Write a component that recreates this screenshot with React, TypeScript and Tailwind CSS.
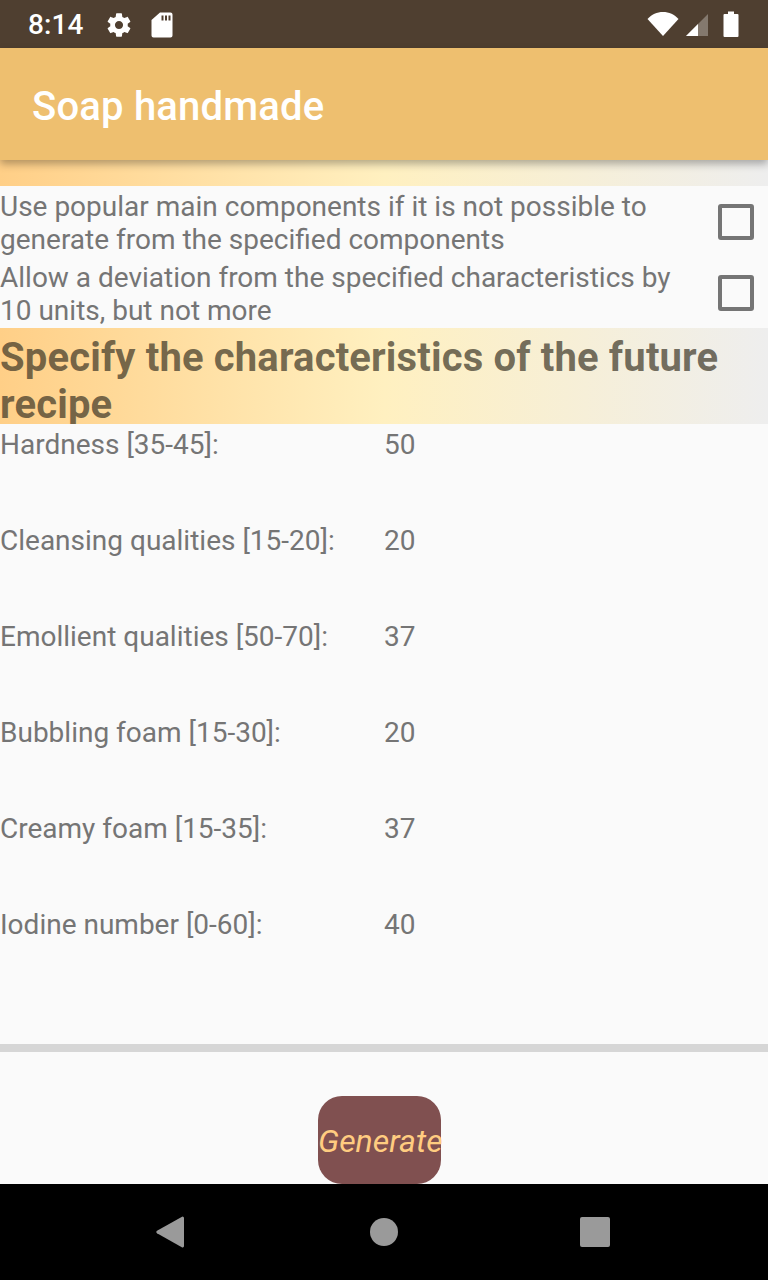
import React from "react";

const rows: [string, string][] = [
  ["Hardness [35-45]:", "50"],
  ["Cleansing qualities [15-20]:", "20"],
  ["Emollient qualities [50-70]:", "37"],
  ["Bubbling foam [15-30]:", "20"],
  ["Creamy foam [15-35]:", "37"],
  ["Iodine number [0-60]:", "40"],
];

const gradient = "bg-[linear-gradient(90deg,#ffcf87_0%,#fff0c0_50%,#eeeeee_100%)]";

function Check() {
  return <div className="w-[36px] h-[36px] rounded-[3px] border-[4px] border-[#757575] mr-[14px] shrink-0" />;
}

export default function App() {
  return (
    <div className="relative w-[768px] h-[1280px] overflow-hidden bg-[#fafafa] flex flex-col font-['Roboto',sans-serif] text-[#757575]">
      <div className="h-[48px] bg-[#4f3f30] flex items-center text-white shrink-0">
        <span className="ml-[28px] text-[28px] leading-[48px] tracking-[0.1px] mt-[2px] font-medium">8:14</span>
        <svg className="ml-[21px] mt-[1px]" width="28" height="28" viewBox="0 0 24 24" fill="#fff">
          <path d="M19.43 12.98c.04-.32.07-.64.07-.98s-.03-.66-.07-.98l2.11-1.65c.19-.15.24-.42.12-.64l-2-3.46c-.12-.22-.39-.3-.61-.22l-2.49 1c-.52-.4-1.08-.73-1.69-.98l-.38-2.65C14.46 2.18 14.25 2 14 2h-4c-.25 0-.46.18-.49.42l-.38 2.65c-.61.25-1.17.59-1.69.98l-2.49-1c-.23-.09-.49 0-.61.22l-2 3.46c-.13.22-.07.49.12.64l2.11 1.65c-.04.32-.07.65-.07.98s.03.66.07.98l-2.11 1.65c-.19.15-.24.42-.12.64l2 3.46c.12.22.39.3.61.22l2.49-1c.52.4 1.08.73 1.69.98l.38 2.65c.03.24.24.42.49.42h4c.25 0 .46-.18.49-.42l.38-2.65c.61-.25 1.17-.59 1.69-.98l2.49 1c.23.09.49 0 .61-.22l2-3.46c.12-.22.07-.49-.12-.64l-2.11-1.65zM12 15.5c-1.93 0-3.5-1.57-3.5-3.5s1.57-3.5 3.500-3.500 3.500 1.570 3.500 3.500-1.570 3.500-3.500 3.500z" />
        </svg>
        <svg className="ml-[18px] mt-[1px]" width="22" height="26" viewBox="0 0 22 26" fill="#fff">
          <path fillRule="evenodd" d="M9 1h10.500A2 2 0 0 1 21.500 3v21a2 2 0 0 1-2 2H2.500a2 2 0 0 1-2-2V8.500z M10.500 4v5h2V4z M14 4v5h2V4z M17.500 4v5h2V4z" transform="translate(0 -0.500)" />
        </svg>
        <div className="flex-1" />
        <svg width="32" height="26" viewBox="0 0 32 26" className="mr-[6px]" fill="#fff">
          <path d="M0.500 8C4.500 3.500 10 1 16 1s11.500 2.500 15.500 7L16 25z" />
        </svg>
        <svg width="24" height="24" viewBox="0 0 24 24" className="mr-[14px]">
          <path d="M23 2v22H1z" fill="#fff" fillOpacity="0.3" />
          <path d="M13 12v12H1z" fill="#fff" />
        </svg>
        <svg width="16" height="26" viewBox="0 0 16 26" className="mr-[29px]" fill="#fff">
          <path d="M5 0.500h6v2.500h3.500a1 1 0 0 1 1 1v21a1 1 0 0 1-1 1H1.500a1 1 0 0 1-1-1V4a1 1 0 0 1 1-1H5z" />
        </svg>
      </div>

      <div className="relative z-10 h-[112px] bg-[#eebf6f] shrink-0 flex items-center pl-[32px] shadow-[0_4px_8px_rgba(0,0,0,0.3)]">
        <span className="text-white text-[40px] font-medium leading-[46px] mt-[5px] tracking-[0.2px]">Soap handmade</span>
      </div>

      <div className={`h-[26px] shrink-0 ${gradient}`} />

      <div className="flex items-center h-[71px] shrink-0">
        <div className="flex-1 text-[28px] leading-[33px] mt-[2px]">Use popular main components if it is not possible to generate from the specified components</div>
        <Check />
      </div>
      <div className="flex items-center h-[71px] shrink-0">
        <div className="flex-1 text-[28px] leading-[33px] mt-[2px] pr-[24px]">Allow a deviation from the specified characteristics by 10 units, but not more</div>
        <Check />
      </div>

      <div className={`h-[96px] shrink-0 text-[40px] font-bold leading-[47px] pt-[6px] overflow-hidden tracking-[0.15px] text-[rgba(56,50,36,0.7)] ${gradient}`}>
        Specify the characteristics of the future recipe
      </div>

      <div className="flex flex-col shrink-0">
        {rows.map(([label, value]) => (
          <div key={label} className="h-[96px] flex text-[28px] leading-[41px]">
            <span className="w-[384px]">{label}</span>
            <span>{value}</span>
          </div>
        ))}
      </div>

      <div className="h-[44px] shrink-0" />
      <div className="h-[8px] bg-[#d6d6d6] shrink-0" />
      <div className="h-[44px] shrink-0" />

      <div className="flex justify-center shrink-0 pr-[9px]">
        <div className="w-[123px] h-[88px] rounded-[24px] bg-[#805050] text-[#ffcc80] italic text-[32px] leading-[90px] text-center whitespace-nowrap">
          Generate
        </div>
      </div>

      <div className="h-[96px] bg-black shrink-0 flex items-center">
        <svg className="ml-[155px] mt-[-1px]" width="30" height="34" viewBox="0 0 30 34" fill="#9a9a9a">
          <path d="M27.500 1.500a1.500 1.500 0 0 1 1.500 1.500v28a1.500 1.500 0 0 1-2.200 1.300L2 18.200a1.400 1.400 0 0 1 0-2.400z" />
        </svg>
        <div className="ml-[185px] w-[28px] h-[28px] rounded-full bg-[#9a9a9a]" />
        <div className="ml-[182px] w-[30px] h-[30px] rounded-[2px] bg-[#9a9a9a]" />
      </div>
    </div>
  );
}
